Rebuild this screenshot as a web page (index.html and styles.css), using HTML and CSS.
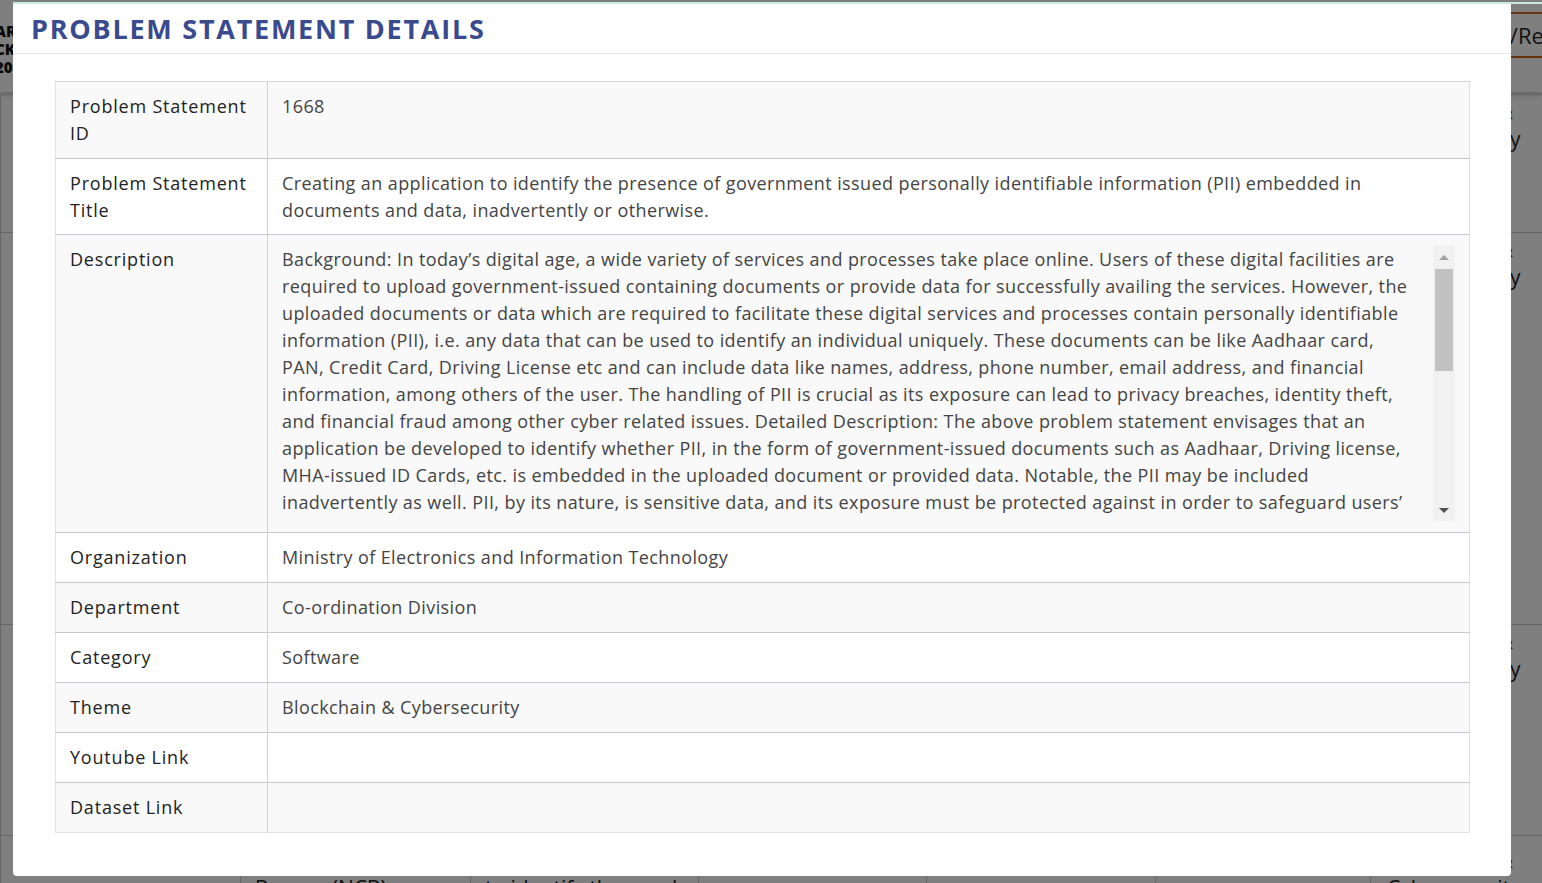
FILE: index.html
```html
<!DOCTYPE html>
<html lang="en">
<head>
<meta charset="utf-8">
<title>Problem Statement Details</title>
<link rel="stylesheet" href="styles.css">
</head>
<body>
<div class="page">
  <header class="site-header">
    <div class="logo">AR<br>CK<br>20</div>
    <div class="header-btn">View/Register</div>
  </header>
  <table class="bg-table">
    <tr class="bg-r1">
      <td></td><td></td><td></td><td></td><td></td><td></td><td class="bg-theme">Blockchain &amp;<br>Cybersecurity</td>
    </tr>
    <tr class="bg-r2">
      <td></td><td></td><td></td><td></td><td></td><td></td><td class="bg-theme">Blockchain &amp;<br>Cybersecurity</td>
    </tr>
    <tr class="bg-r3">
      <td></td><td></td><td></td><td></td><td></td><td></td><td class="bg-theme">Blockchain &amp;<br>Cybersecurity</td>
    </tr>
    <tr class="bg-r4">
      <td></td><td>Narcotics Control<br>Bureau (NCB)</td><td>A system<br>to identify the numbers</td><td></td><td></td><td></td><td class="bg-theme">Blockchain &amp;<br>Cybersecurity</td>
    </tr>
  </table>
</div>
<div class="overlay"></div>
<div class="teal-line"></div>
<div class="modal">
  <div class="modal-header">
    <h2 class="modal-title">PROBLEM STATEMENT DETAILS</h2>
  </div>
  <div class="modal-body">
    <table class="details">
      <colgroup><col class="col-label"><col class="col-value"></colgroup>
      <tr>
        <td class="label">Problem Statement ID</td>
        <td class="value">1668</td>
      </tr>
      <tr>
        <td class="label">Problem Statement Title</td>
        <td class="value">Creating an application to identify the presence of government issued personally identifiable information (PII) embedded in documents and data, inadvertently or otherwise.</td>
      </tr>
      <tr>
        <td class="label">Description</td>
        <td class="value">
          <div class="desc-box">
            <div class="desc-text">Background: In today’s digital age, a wide variety of services and processes take place online. Users of these digital facilities are<br>
required to upload government-issued containing documents or provide data for successfully availing the services. However, the<br>
uploaded documents or data which are required to facilitate these digital services and processes contain personally identifiable<br>
information (PII), i.e. any data that can be used to identify an individual uniquely. These documents can be like Aadhaar card,<br>
PAN, Credit Card, Driving License etc and can include data like names, address, phone number, email address, and financial<br>
information, among others of the user. The handling of PII is crucial as its exposure can lead to privacy breaches, identity theft,<br>
and financial fraud among other cyber related issues. Detailed Description: The above problem statement envisages that an<br>
application be developed to identify whether PII, in the form of government-issued documents such as Aadhaar, Driving license,<br>
MHA-issued ID Cards, etc. is embedded in the uploaded document or provided data. Notable, the PII may be included<br>
inadvertently as well. PII, by its nature, is sensitive data, and its exposure must be protected against in order to safeguard users’<br>
privacy. Entities and organizations handling documents and data containing such PII must be mindful of the same and shall<br>
take appropriate measures to protect it. Expected Solution: An application that scans documents and data to detect<br>
government-issued PII and alerts the user.</div>
            <div class="scrollbar">
              <div class="sb-btn"><span class="arrow-up"></span></div>
              <div class="sb-track"><div class="sb-thumb"></div></div>
              <div class="sb-btn"><span class="arrow-down"></span></div>
            </div>
          </div>
        </td>
      </tr>
      <tr>
        <td class="label">Organization</td>
        <td class="value">Ministry of Electronics and Information Technology</td>
      </tr>
      <tr>
        <td class="label">Department</td>
        <td class="value">Co-ordination Division</td>
      </tr>
      <tr>
        <td class="label">Category</td>
        <td class="value">Software</td>
      </tr>
      <tr>
        <td class="label">Theme</td>
        <td class="value">Blockchain &amp; Cybersecurity</td>
      </tr>
      <tr>
        <td class="label">Youtube Link</td>
        <td class="value"></td>
      </tr>
      <tr>
        <td class="label">Dataset Link</td>
        <td class="value"></td>
      </tr>
    </table>
  </div>
</div>
</body>
</html>
```

FILE: styles.css
```css
* { box-sizing: border-box; }

html, body {
  margin: 0;
  padding: 0;
  height: 100%;
  overflow: hidden;
  font-family: "Open Sans", "Liberation Sans", sans-serif;
  background: #fff;
}

/* ---------- background page ---------- */
.page {
  width: 100%;
  height: 100%;
  background: #fff;
  overflow: hidden;
}

.site-header {
  height: 92px;
  display: flex;
  align-items: center;
  justify-content: space-between;
  background: #fff;
  box-shadow: 0 2px 6px rgba(0,0,0,0.25);
  overflow: hidden;
}

.logo {
  font-weight: 800;
  font-size: 15px;
  line-height: 18px;
  color: #111;
  margin-left: -5px;
  padding-top: 6px;
}

.header-btn {
  flex: 0 0 auto;
  margin-right: -73px;
  padding: 6px 14px;
  border-top: 2px solid #d0661f;
  border-bottom: 2px solid #d0661f;
  font-size: 22px;
  color: #222;
  line-height: 30px;
  margin-top: -22px;
}

.bg-table {
  border-collapse: collapse;
  margin-top: 2px;
  width: 1542px;
  table-layout: fixed;
}

.bg-table td {
  border: 1px solid #ccc;
  font-size: 21px;
  color: #222;
  vertical-align: top;
  padding: 2px 14px;
  white-space: nowrap;
  overflow: hidden;
}

.bg-table td:nth-child(1) { width: 240px; }
.bg-table td:nth-child(2) { width: 230px; }
.bg-table td:nth-child(3) { width: 228px; }
.bg-table td:nth-child(4) { width: 228px; }
.bg-table td:nth-child(5) { width: 229px; }
.bg-table td:nth-child(6) { width: 215px; }
.bg-table td:nth-child(7) { width: 172px; }

.bg-r1 td { height: 138px; }
.bg-r2 td { height: 392px; }
.bg-r3 td { height: 211px; }
.bg-r4 td { height: 60px; padding-top: 10px; line-height: 28px; }

.bg-theme { padding-left: 16px !important; line-height: 28px; }

.overlay {
  position: fixed;
  inset: 0;
  background: rgba(0,0,0,0.5);
}

.teal-line {
  position: fixed;
  top: 2px;
  left: 13px;
  right: 0;
  height: 2px;
  background: #c6ebe4;
}

/* ---------- modal ---------- */
.modal {
  position: fixed;
  left: 13px;
  top: 4px;
  width: 1498px;
  height: 872px;
  background: #fff;
  border-radius: 0 0 4px 4px;
}

.modal-header {
  height: 50px;
  border-bottom: 1px solid #e4e6e8;
  padding: 10px 18px 0;
}

.modal-title {
  margin: 0;
  font-family: "Open Sans", "Liberation Sans", sans-serif;
  font-weight: 700;
  font-size: 27px;
  line-height: 30px;
  color: #3a4a8e;
  letter-spacing: 1.75px;
}

.modal-body {
  padding: 27px 41px 0 42px;
}

.details {
  width: 1414px;
  border-collapse: collapse;
  border: 1px solid #dfe2e6;
  table-layout: fixed;
}

.col-label { width: 212px; }
.col-value { width: 1202px; }

.details td {
  border-top: 1px solid #c4c9d0;
  padding: 11px 14px 10.5px 14px;
  font-size: 18px;
  line-height: 27px;
  vertical-align: top;
  text-align: left;
}

.details tr:first-child td { border-top: 1px solid #d3d6da; }

.details tr:nth-child(odd) td { background: #f9f9f9; }
.details tr:nth-child(even) td { background: #fff; }

.details td.label {
  border-right: 1px solid #cdd1d6;
  color: #222;
  font-weight: 500;
  font-size: 18px;
  letter-spacing: 0.8px;
  padding-right: 10px;
  height: 50px;
}

.details td.value {
  color: #444;
  font-weight: 400;
  letter-spacing: 0.4px;
}

.desc-box {
  display: flex;
  height: 275px;
}

.desc-text {
  flex: 1;
  overflow: hidden;
  white-space: nowrap;
  padding-right: 2px;
}

.scrollbar {
  width: 22px;
  flex: 0 0 22px;
  background: #f1f1f1;
  display: flex;
  flex-direction: column;
}

.sb-btn {
  height: 22px;
  display: flex;
  align-items: center;
  justify-content: center;
}

.sb-track {
  flex: 1;
  padding: 1px 2px;
}

.sb-thumb {
  height: 102px;
  background: #c1c1c1;
}

.arrow-up {
  width: 0;
  height: 0;
  border-left: 5px solid transparent;
  border-right: 5px solid transparent;
  border-bottom: 5px solid #a3a3a3;
}

.arrow-down {
  width: 0;
  height: 0;
  border-left: 5px solid transparent;
  border-right: 5px solid transparent;
  border-top: 5px solid #505050;
}
```
